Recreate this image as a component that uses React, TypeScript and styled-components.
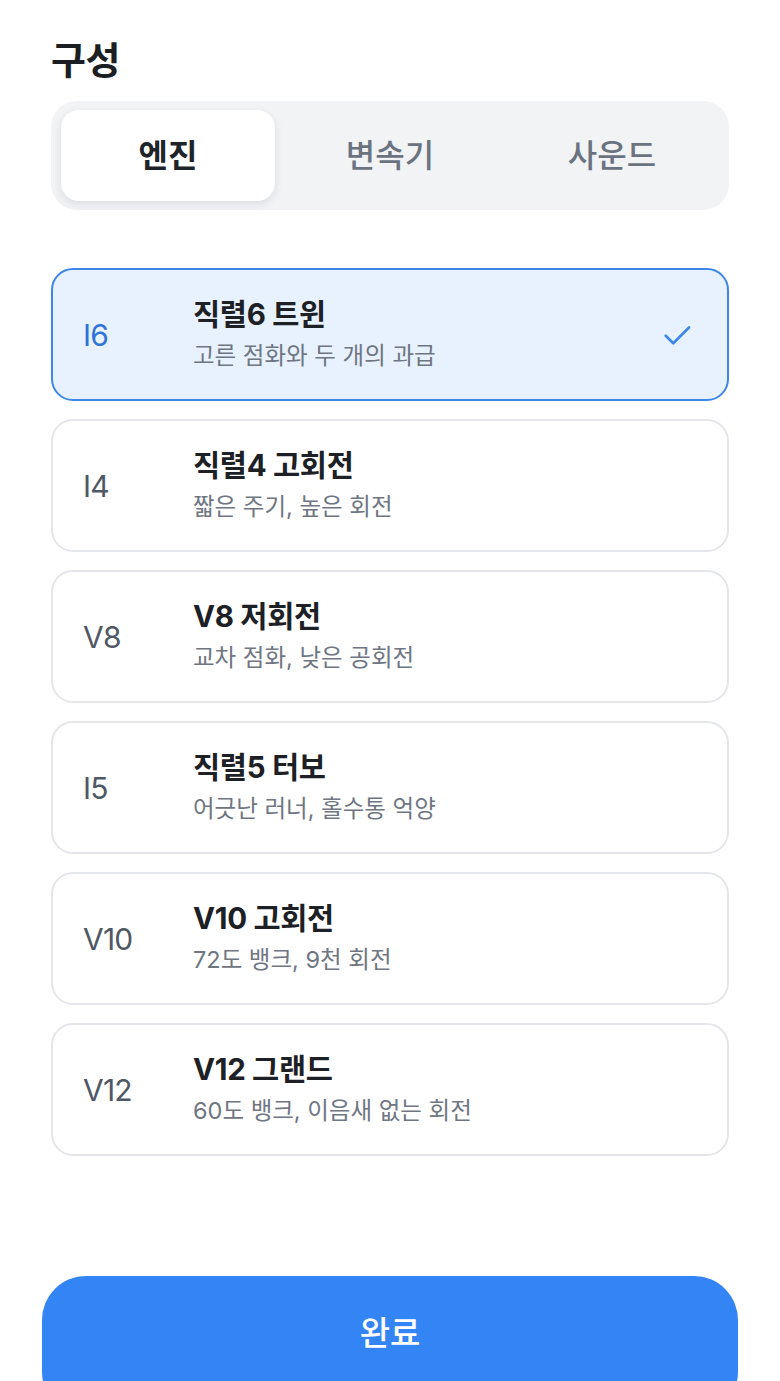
import React, {FC, useState} from 'react';
import styled, {createGlobalStyle} from "styled-components";

const GlobalStyle = createGlobalStyle`
  html, body {
    margin: 0;
    padding: 0;
    background: #ffffff;
    overflow: hidden;
  }
  body {
    font-family: Inter, "Noto Sans CJK KR", sans-serif;
    -webkit-font-smoothing: antialiased;
  }
  * {
    box-sizing: border-box;
  }
`

type Engine = {
    code: string,
    title: string,
    subTitle: string
}

const engines: Engine[] = [
    {code: "I6", title: "직렬6 트윈", subTitle: "고른 점화와 두 개의 과급"},
    {code: "I4", title: "직렬4 고회전", subTitle: "짧은 주기, 높은 회전"},
    {code: "V8", title: "V8 저회전", subTitle: "교차 점화, 낮은 공회전"},
    {code: "I5", title: "직렬5 터보", subTitle: "어긋난 러너, 홀수통 억양"},
    {code: "V10", title: "V10 고회전", subTitle: "72도 뱅크, 9천 회전"},
    {code: "V12", title: "V12 그랜드", subTitle: "60도 뱅크, 이음새 없는 회전"},
]

const tabs = ["엔진", "변속기", "사운드"]

const Page = styled.div`
  width: 780px;
  height: 1381px;
  overflow: hidden;
  display: flex;
  flex-direction: column;
  padding: 35px 51px 0;

  & > * {
    flex-shrink: 0;
  }
`

const Heading = styled.h1`
  margin: 0 0 16px 0;
  font-size: 38px;
  line-height: 50px;
  font-weight: 700;
  color: #1b1e22;
  letter-spacing: -0.5px;
`

const TabBar = styled.div`
  display: grid;
  grid-template-columns: repeat(3, 1fr);
  gap: 8px;
  padding: 9px 10px;
  height: 109px;
  background: #f1f3f5;
  border-radius: 26px;
`

const Tab = styled.button<{ $active?: boolean }>`
  border: none;
  font: inherit;
  font-size: 32px;
  font-weight: ${p => p.$active ? 700 : 500};
  color: ${p => p.$active ? "#1f242b" : "#6b7380"};
  background: ${p => p.$active ? "#ffffff" : "transparent"};
  border-radius: 18px;
  box-shadow: ${p => p.$active ? "0 3px 8px rgba(30, 40, 60, 0.10)" : "none"};
  cursor: pointer;
  display: flex;
  align-items: center;
  justify-content: center;
  padding: 0 0 5px;
`

const List = styled.div`
  display: flex;
  flex-direction: column;
  gap: 18px;
  margin-top: 58px;
`

const Card = styled.div<{ $selected?: boolean }>`
  height: 133px;
  display: flex;
  align-items: center;
  padding: 0 32px 0 30px;
  border-radius: 22px;
  border: 2px solid ${p => p.$selected ? "#3d86ea" : "#e4e6e9"};
  background: ${p => p.$selected ? "#e7f2fe" : "#ffffff"};
  cursor: pointer;
`

const Code = styled.div<{ $selected?: boolean }>`
  width: 110px;
  flex-shrink: 0;
  font-size: 30px;
  font-weight: 400;
  color: ${p => p.$selected ? "#2f72d8" : "#4f5864"};
  letter-spacing: -0.8px;
`

const Content = styled.div`
  flex: 1;
  display: flex;
  flex-direction: column;
  gap: 8px;
  margin-top: -2px;
`

const CardTitle = styled.div`
  font-size: 29.5px;
  line-height: 36px;
  font-weight: 700;
  color: #1d2126;
  letter-spacing: -0.3px;
`

const CardSubTitle = styled.div`
  font-size: 23.5px;
  line-height: 32px;
  font-weight: 400;
  color: #6f7682;
`

const Check = styled.svg`
  width: 36px;
  height: 36px;
  flex-shrink: 0;
`

const DoneButton = styled.button`
  margin: 120px -9px 0;
  height: 140px;
  padding-bottom: 32px;
  border: none;
  border-radius: 44px;
  background: #3384f4;
  color: #ffffff;
  font: inherit;
  font-size: 33px;
  font-weight: 500;
  cursor: pointer;
`

const App: FC = () => {
    const [tab, setTab] = useState(0)
    const [selected, setSelected] = useState(0)

    return (
        <Page>
            <GlobalStyle/>
            <Heading>구성</Heading>
            <TabBar>
                {tabs.map((t, i) => (
                    <Tab key={t} $active={tab === i} onClick={() => setTab(i)}>{t}</Tab>
                ))}
            </TabBar>
            <List>
                {engines.map((e, i) => (
                    <Card key={e.code} $selected={selected === i} onClick={() => setSelected(i)}>
                        <Code $selected={selected === i}>{e.code}</Code>
                        <Content>
                            <CardTitle>{e.title}</CardTitle>
                            <CardSubTitle>{e.subTitle}</CardSubTitle>
                        </Content>
                        {selected === i && (
                            <Check viewBox="0 0 24 24" fill="none" stroke="#3d86ea" strokeWidth="1.8"
                                   strokeLinecap="round" strokeLinejoin="round">
                                <path d="M4.5 12.5l5 5L20 7"/>
                            </Check>
                        )}
                    </Card>
                ))}
            </List>
            <DoneButton>완료</DoneButton>
        </Page>
    );
};

export default App;
